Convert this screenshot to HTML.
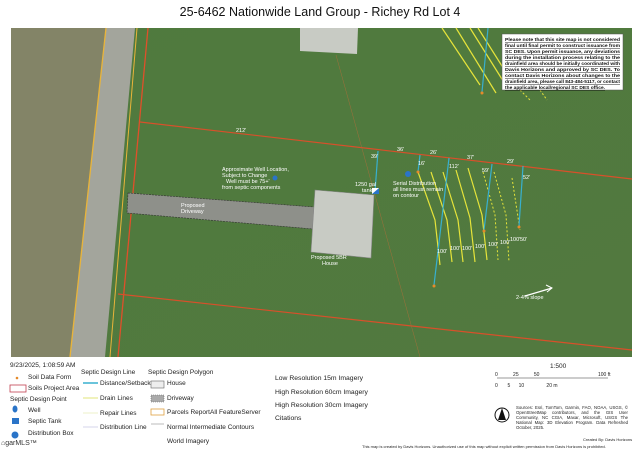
<!DOCTYPE html>
<html><head><meta charset="utf-8"><style>
body{margin:0;width:640px;height:452px;background:#fff;overflow:hidden;font-family:"Liberation Sans",sans-serif;position:relative}
.t{position:absolute;white-space:nowrap;color:#222}
.s{font-size:6.5px}
.l{font-size:6.8px}
</style></head><body>
<div class="t" style="left:0;width:640px;text-align:center;top:5px;font-size:12.5px;color:#111">25-6462 Nationwide Land Group - Richey Rd Lot 4</div>
<svg style="position:absolute;left:0;top:0" width="640" height="452">
<defs><linearGradient id="g" x1="0" x2="1" y1="0" y2="1"><stop offset="0" stop-color="#4f7a3e"/><stop offset="1" stop-color="#52793f"/></linearGradient></defs>
<rect x="11" y="28" width="621" height="329" fill="url(#g)"/>
<polygon points="11,28 106,28 70,357 11,357" fill="#838467"/>
<polygon points="106,28 135,28 105,357 70,357" fill="#a3a59c"/>
<line x1="106" y1="28" x2="70" y2="357" stroke="#e9b43a" stroke-width="1.3"/>
<line x1="137" y1="28" x2="110" y2="357" stroke="#e9b43a" stroke-width="1"/>
<line x1="148" y1="28" x2="118" y2="357" stroke="#e0502a" stroke-width="1.3"/>
<line x1="140" y1="122" x2="632" y2="179" stroke="#d8502a" stroke-width="1.2"/>
<line x1="118" y1="294" x2="632" y2="350" stroke="#d8502a" stroke-width="1.2"/>
<line x1="336" y1="55" x2="420" y2="357" stroke="#a0703a" stroke-width="0.5"/>
<polygon points="128,193 314,207 313,229 127,213" fill="#8e908a" stroke="#333" stroke-width="0.6" stroke-dasharray="2,1"/>
<polygon points="315,190 374,195 371,258 311,252" fill="#c8cbc4" stroke="#888" stroke-width="0.6"/>
<polygon points="300,28 358,28 357,54 300,51" fill="#c8cbc4"/>
<g stroke="#e6e43a" stroke-width="1.2" fill="none">
<line x1="442" y1="28" x2="480" y2="85"/><line x1="456" y1="28" x2="496" y2="93"/><line x1="470" y1="28" x2="505" y2="84"/>
<line x1="478" y1="28" x2="507" y2="74"/>
<polyline points="418,172 435,220 440,265"/><polyline points="431,172 447,220 452,262"/>
<polyline points="443,172 458,220 463,262"/><polyline points="456,170 470,218 475,262"/>
<polyline points="468,168 482,215 487,260"/>
</g>
<g stroke="#e6e43a" stroke-width="1" fill="none" stroke-dasharray="2,2">
<polyline points="483,172 495,215 498,260"/><polyline points="494,172 506,215 509,262"/>
<polyline points="512,178 520,230"/><polyline points="520,90 530,100"/><polyline points="540,90 547,100"/>
</g>
<g stroke="#38b0cf" stroke-width="1.2">
<line x1="488" y1="28" x2="482" y2="92"/><line x1="378" y1="151" x2="375" y2="192"/><line x1="420" y1="155" x2="418" y2="172"/>
<line x1="449" y1="158" x2="434" y2="285"/><line x1="492" y1="164" x2="484" y2="230"/><line x1="523" y1="166" x2="519" y2="226"/>
</g>
<g fill="#e58a2a"><circle cx="482" cy="93" r="1.5"/><circle cx="434" cy="286" r="1.5"/><circle cx="484" cy="231" r="1.5"/><circle cx="519" cy="227" r="1.5"/><circle cx="418" cy="172" r="1.5"/></g>
<circle cx="408" cy="174" r="3" fill="#2a74c8"/>
<rect x="372" y="188" width="7" height="6" fill="#fff"/><polygon points="372,194 379,188 379,194" fill="#2a74c8"/>
<circle cx="275" cy="178" r="2.5" fill="#2a74c8"/>
<line x1="525" y1="296" x2="552" y2="288" stroke="#fff" stroke-width="1.2"/><polyline points="546,285 552,288 547,292" stroke="#fff" fill="none"/>
<g fill="#fff" font-size="5.5" font-family="Liberation Sans">
<text x="236" y="132">212'</text><text x="371" y="158">39'</text><text x="397" y="151">36'</text><text x="430" y="154">26'</text><text x="467" y="159">37'</text><text x="507" y="163">29'</text>
<text x="418" y="165">16'</text><text x="449" y="168">112'</text><text x="482" y="172">59'</text><text x="523" y="179">52'</text>
<text x="437" y="253">100'</text><text x="450" y="250">100'</text><text x="462" y="250">100'</text><text x="475" y="248">100'</text><text x="488" y="246">100'</text><text x="500" y="244">100'</text><text x="510" y="241">100'</text><text x="520" y="241">50'</text>
<text x="355" y="186">1250 gal</text><text x="362" y="192">tank</text>
<text x="393" y="185">Serial Distribution</text><text x="393" y="191">all lines must remain</text><text x="393" y="197">on contour</text>
<text x="222" y="171">Approximate Well Location,</text><text x="222" y="177">Subject to Change</text><text x="226" y="183">Well must be 75+'</text><text x="222" y="189">from septic components</text>
<text x="181" y="207">Proposed</text><text x="181" y="213">Driveway</text>
<text x="311" y="259">Proposed 5BR</text><text x="322" y="265">House</text>
<text x="516" y="299">2-4% slope</text>
</g>
<rect x="502" y="34" width="121" height="56" fill="#fff" stroke="#555" stroke-width="0.5"/>
<g font-size="4.6" font-family="Liberation Sans" fill="#111" text-decoration="underline" font-weight="bold" lengthAdjust="spacingAndGlyphs">
<text x="505" y="41" textLength="115" lengthAdjust="spacingAndGlyphs">Please note that this site map is not considered</text>
<text x="505" y="47" textLength="115" lengthAdjust="spacingAndGlyphs">final until final permit to construct issuance from</text>
<text x="505" y="53" textLength="115" lengthAdjust="spacingAndGlyphs">SC DES. Upon permit issuance, any deviations</text>
<text x="505" y="59" textLength="115" lengthAdjust="spacingAndGlyphs">during the installation process relating to the</text>
<text x="505" y="65" textLength="115" lengthAdjust="spacingAndGlyphs">drainfield area should be initially coordinated with</text>
<text x="505" y="71" textLength="115" lengthAdjust="spacingAndGlyphs">Davis Horizons and approved by SC DES. To</text>
<text x="505" y="77" textLength="115" lengthAdjust="spacingAndGlyphs">contact Davis Horizons about changes to the</text>
<text x="505" y="83" textLength="115" lengthAdjust="spacingAndGlyphs">drainfield area, please call 843-484-5117, or contact</text>
<text x="505" y="89" textLength="100" lengthAdjust="spacingAndGlyphs">the applicable local/regional SC DES office.</text>
</g>
<circle cx="17" cy="378" r="1.3" fill="#e58a2a"/>
<rect x="10" y="385" width="16" height="7" fill="none" stroke="#c04050" stroke-width="0.8"/>
<ellipse cx="15" cy="409" rx="2.5" ry="3.5" fill="#2a74c8"/>
<rect x="12" y="418" width="7" height="6" fill="#2a74c8"/>
<circle cx="15" cy="435" r="3.5" fill="#2a74c8"/>
<line x1="83" y1="383" x2="98" y2="383" stroke="#38b0cf" stroke-width="1.5"/>
<line x1="83" y1="398" x2="98" y2="398" stroke="#e6e890" stroke-width="1.2"/>
<line x1="83" y1="413" x2="98" y2="413" stroke="#eef0c8" stroke-width="1"/>
<line x1="83" y1="427" x2="98" y2="427" stroke="#dde" stroke-width="1.2"/>
<rect x="151" y="381" width="13" height="7" fill="#eee" stroke="#666" stroke-width="0.6"/>
<rect x="151" y="395" width="13" height="7" fill="#aaa" stroke="#666" stroke-width="0.6" stroke-dasharray="1,1"/>
<rect x="151" y="409" width="13" height="6" fill="none" stroke="#e0a040" stroke-width="0.8"/>
<line x1="151" y1="424" x2="164" y2="424" stroke="#bbb" stroke-width="1"/>
<line x1="497" y1="378" x2="608" y2="378" stroke="#333" stroke-width="0.5"/>
<circle cx="502" cy="415" r="7" fill="#fff" stroke="#111" stroke-width="1"/>
<polygon points="502,408 498,420 506,420" fill="#111"/>
</svg>
<div class="t s" style="left:10px;top:362px">9/23/2025, 1:08:59 AM</div>
<div class="t s" style="left:28px;top:374px">Soil Data Form</div>
<div class="t s" style="left:28px;top:385px">Soils Project Area</div>
<div class="t s" style="left:10px;top:396px">Septic Design Point</div>
<div class="t s" style="left:28px;top:407px">Well</div>
<div class="t s" style="left:28px;top:418px">Septic Tank</div>
<div class="t s" style="left:28px;top:430px">Distribution Box</div>
<div class="t s" style="left:81px;top:369px">Septic Design Line</div>
<div class="t s" style="left:100px;top:380px">Distance/Setback</div>
<div class="t s" style="left:100px;top:395px">Drain Lines</div>
<div class="t s" style="left:100px;top:410px">Repair Lines</div>
<div class="t s" style="left:100px;top:424px">Distribution Line</div>
<div class="t s" style="left:148px;top:369px">Septic Design Polygon</div>
<div class="t s" style="left:167px;top:380px">House</div>
<div class="t s" style="left:167px;top:395px">Driveway</div>
<div class="t s" style="left:167px;top:409px">Parcels ReportAll FeatureServer</div>
<div class="t s" style="left:167px;top:424px">Normal Intermediate Contours</div>
<div class="t s" style="left:167px;top:438px">World Imagery</div>
<div class="t l" style="left:275px;top:375px">Low Resolution 15m Imagery</div>
<div class="t l" style="left:275px;top:389px">High Resolution 60cm Imagery</div>
<div class="t l" style="left:275px;top:402px">High Resolution 30cm Imagery</div>
<div class="t l" style="left:275px;top:415px">Citations</div>
<div class="t s" style="left:550px;top:363px">1:500</div>
<div class="t" style="left:495px;top:372px;font-size:5px">0&nbsp;&nbsp;&nbsp;&nbsp;&nbsp;&nbsp;&nbsp;&nbsp;&nbsp;&nbsp;&nbsp;25&nbsp;&nbsp;&nbsp;&nbsp;&nbsp;&nbsp;&nbsp;&nbsp;&nbsp;&nbsp;&nbsp;50</div>
<div class="t" style="left:598px;top:372px;font-size:5px">100 ft</div>
<div class="t" style="left:495px;top:383px;font-size:5px">0&nbsp;&nbsp;&nbsp;&nbsp;&nbsp;&nbsp;&nbsp;5&nbsp;&nbsp;&nbsp;&nbsp;&nbsp;&nbsp;10&nbsp;&nbsp;&nbsp;&nbsp;&nbsp;&nbsp;&nbsp;&nbsp;&nbsp;&nbsp;&nbsp;&nbsp;&nbsp;&nbsp;&nbsp;&nbsp;20 m</div>
<div class="t" style="left:516px;top:405px;font-size:4.3px;line-height:5px;white-space:normal;width:112px;text-align:justify">Sources: Esri, TomTom, Garmin, FAO, NOAA, USGS, © OpenStreetMap contributors, and the GIS User Community, NC CGIA, Maxar, Microsoft, USGS The National Map: 3D Elevation Program. Data Refreshed October, 2025.</div>
<div class="t" style="left:583px;top:437px;font-size:4px">Created By: Davis Horizons</div>
<div class="t" style="left:362px;top:444px;font-size:4px">This map is created by Davis Horizons. Unauthorized use of this map without explicit written permission from Davis Horizons is prohibited.</div>
<div class="t" style="left:1px;top:440px;font-size:7px;color:#333">⌂garMLS™</div>
</body></html>
